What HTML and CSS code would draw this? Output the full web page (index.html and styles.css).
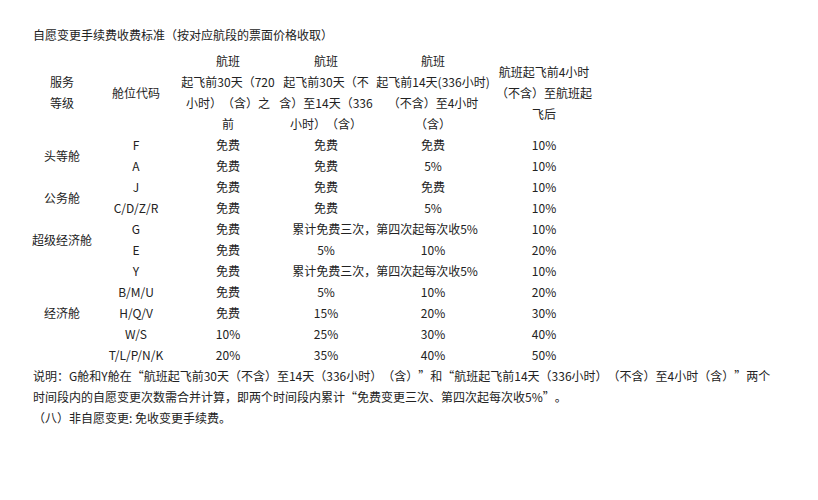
FILE: index.html
```html
<!DOCTYPE html>
<html lang="zh-CN">
<head>
<meta charset="utf-8">
<title>自愿变更手续费收费标准</title>
<link rel="stylesheet" href="styles.css">
</head>
<body>
<div class="page">
  <p class="title">自愿变更手续费收费标准（按对应航段的票面价格收取）</p>
  <table class="fees">
    <colgroup>
      <col class="c1"><col class="c2"><col class="c3"><col class="c4"><col class="c5"><col class="c6">
    </colgroup>
    <thead>
      <tr>
        <th>服务<br>等级</th>
        <th>舱位代码</th>
        <th>航班<br>起飞前30天（720<br>小时）（含）之<br>前</th>
        <th>航班<br>起飞前30天（不<br>含）至14天（336<br>小时）（含）</th>
        <th>航班<br>起飞前14天(336小时)<br>（不含）至4小时<br>（含）</th>
        <th>航班起飞前4小时<br>（不含）至航班起<br>飞后</th>
      </tr>
    </thead>
    <tbody>
      <tr><td rowspan="2">头等舱</td><td>F</td><td>免费</td><td>免费</td><td>免费</td><td>10%</td></tr>
      <tr><td>A</td><td>免费</td><td>免费</td><td>5%</td><td>10%</td></tr>
      <tr><td rowspan="2">公务舱</td><td>J</td><td>免费</td><td>免费</td><td>免费</td><td>10%</td></tr>
      <tr><td>C/D/Z/R</td><td>免费</td><td>免费</td><td>5%</td><td>10%</td></tr>
      <tr><td rowspan="2">超级经济舱</td><td>G</td><td>免费</td><td colspan="2">累计免费三次，第四次起每次收5%</td><td>10%</td></tr>
      <tr><td>E</td><td>免费</td><td>5%</td><td>10%</td><td>20%</td></tr>
      <tr><td rowspan="5">经济舱</td><td>Y</td><td>免费</td><td colspan="2">累计免费三次，第四次起每次收5%</td><td>10%</td></tr>
      <tr><td>B/M/U</td><td>免费</td><td>5%</td><td>10%</td><td>20%</td></tr>
      <tr><td>H/Q/V</td><td>免费</td><td>15%</td><td>20%</td><td>30%</td></tr>
      <tr><td>W/S</td><td>10%</td><td>25%</td><td>30%</td><td>40%</td></tr>
      <tr><td>T/L/P/N/K</td><td>20%</td><td>35%</td><td>40%</td><td>50%</td></tr>
    </tbody>
  </table>
  <p class="note">说明：G舱和Y舱在“航班起飞前30天（不含）至14天（336小时）（含）”和“航班起飞前14天（336小时）（不含）至4小时（含）”两个时间段内的自愿变更次数需合并计算，即两个时间段内累计“免费变更三次、第四次起每次收5%”。</p>
  <p class="note">（八）非自愿变更: 免收变更手续费。</p>
</div>
</body>
</html>
```

FILE: styles.css
```css
html, body {
  margin: 0;
  padding: 0;
  background: #ffffff;
}
body {
  font-family: "Noto Sans CJK SC", "Noto Sans", "Liberation Sans", sans-serif;
  font-size: 12px;
  line-height: 21px;
  color: #222222;
  text-spacing-trim: space-all;
}
.page {
  padding: 24px 36px 0 33px;
}
.title {
  margin: 0 0 5px 0;
}
.fees {
  border-collapse: collapse;
  table-layout: fixed;
  width: 566px;
  margin-left: -3px;
}
.fees col.c1 { width: 64px; }
.fees col.c2 { width: 84px; }
.fees col.c3 { width: 100px; }
.fees col.c4 { width: 96px; }
.fees col.c5 { width: 118px; }
.fees col.c6 { width: 104px; }
.fees th,
.fees td {
  padding: 0;
  text-align: center;
  vertical-align: middle;
  font-weight: normal;
  white-space: nowrap;
}
.note {
  margin: 0;
}
```
